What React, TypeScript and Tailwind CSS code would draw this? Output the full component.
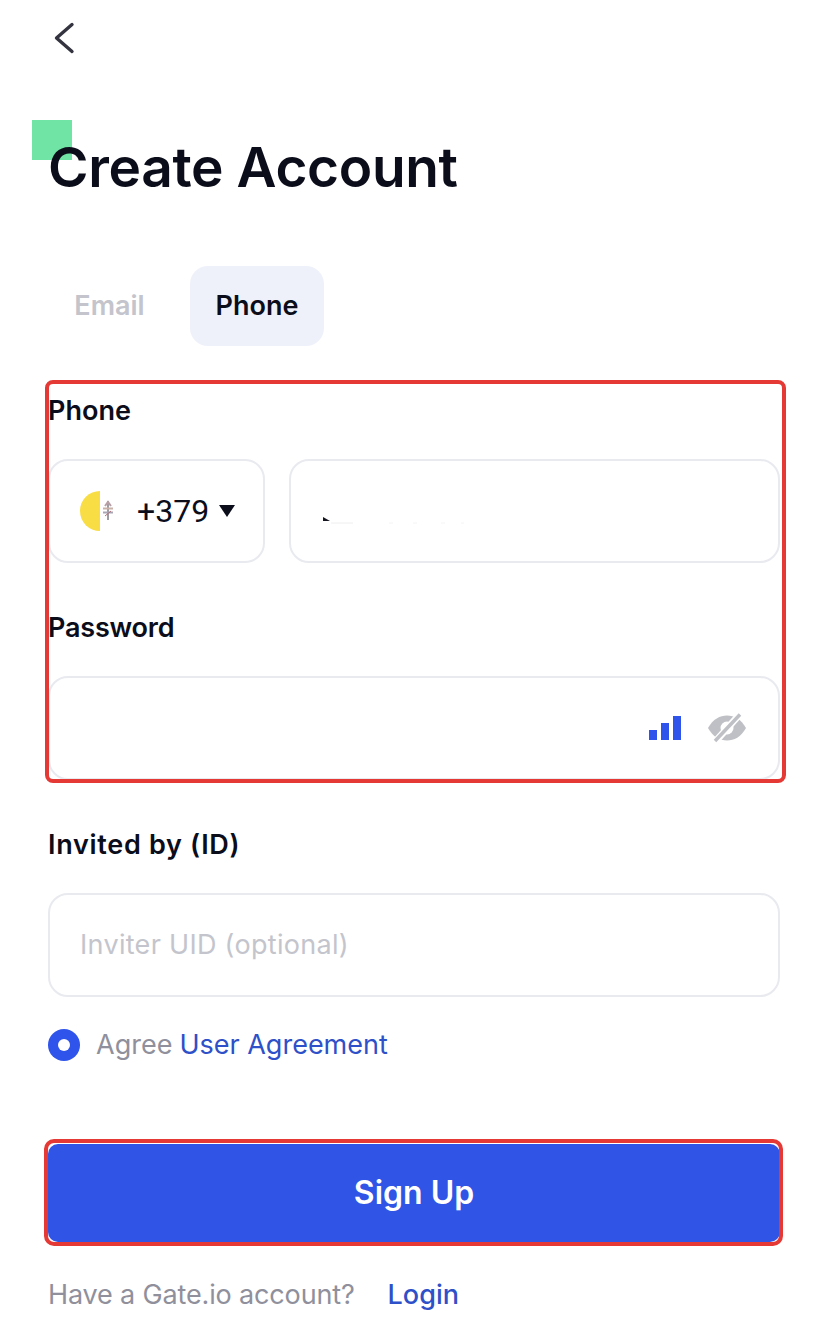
// Create Account screen: phone sign-up form

const FONT = "font-['Inter','Noto_Sans',sans-serif]";

// ─── Icons ────────────────────────────────────────────────────────────────────

function BackArrow() {
  return (
    <svg width="24" height="36" viewBox="0 0 24 36" fill="none" className="ml-[4px]" aria-hidden>
      <path d="M20 4.5 L4.5 18 L20 31.5" stroke="#33343F" strokeWidth="3.4" strokeLinecap="round" strokeLinejoin="round" />
    </svg>
  );
}

function VaticanFlag() {
  return (
    <svg width="44" height="44" viewBox="0 0 44 44" aria-hidden>
      <path d="M22 2 A20 20 0 0 0 22 42 Z" fill="#F8DD45" />
      <g fill="none">
        <path d="M30 12 V31" stroke="#3a3a44" strokeWidth="1" />
        <path d="M27 17 L30 13 L33 17" stroke="#b9a0a6" strokeWidth="2" />
        <path d="M25 19.5 H35" stroke="#c9b1a8" strokeWidth="2" />
        <path d="M25 23.5 H35" stroke="#a9a6b4" strokeWidth="2" />
        <path d="M27 27 L33 22" stroke="#b0727a" strokeWidth="1" />
      </g>
    </svg>
  );
}

function StrengthBars() {
  return (
    <svg width="32" height="24" viewBox="0 0 32 24" aria-hidden>
      <rect x="0" y="14" width="8" height="10" fill="#2F54EB" />
      <rect x="12" y="7" width="8" height="17" fill="#2F54EB" />
      <rect x="24" y="0" width="8" height="24" fill="#2F54EB" />
    </svg>
  );
}

function EyeOff() {
  return (
    <svg width="40" height="30" viewBox="0 0 40 30" aria-hidden>
      <path d="M1 15 C6 6 13 2.5 20 2.5 C27 2.5 34 6 39 15 C34 24 27 27.5 20 27.5 C13 27.5 6 24 1 15 Z" fill="#BFC0C6" />
      <circle cx="20" cy="15" r="6.5" fill="#fff" />
      <path d="M7 30 L34 0" stroke="#fff" strokeWidth="7" />
      <path d="M8 28 L33 1.5" stroke="#BFC0C6" strokeWidth="3.5" />
    </svg>
  );
}

// Leftover of the masked phone number in the reference
function MaskedNumber() {
  return (
    <svg width="150" height="8" viewBox="0 0 150 8" aria-hidden>
      <path d="M0 0 L7 4 L0 4 Z" fill="#14151f" />
      <path d="M8 6 H30" stroke="#eeeef0" strokeWidth="1" />
      <path d="M66 6 H70 M90 6 H94 M118 6 H122 M138 6 H141" stroke="#f4f4f6" strokeWidth="1" />
    </svg>
  );
}

// ─── Component ────────────────────────────────────────────────────────────────

export default function App() {
  return (
    <div className={`${FONT} relative h-[1334px] w-[828px] overflow-hidden bg-white px-[48px] text-[#0B0D1A]`}>
      {/* Green marker behind the title */}
      <div className="absolute left-[32px] top-[120px] h-[40px] w-[40px] bg-[#70E4A4]" aria-hidden />

      {/* Back */}
      <div className="pt-[20px]">
        <BackArrow />
      </div>

      {/* Title */}
      <h1 className="relative mt-[77px] text-[55px] font-semibold leading-[68px] tracking-[-0.35px] text-[#0B0D1A]">
        Create Account
      </h1>

      {/* Tabs */}
      <div className="mt-[65px] flex gap-[19px] text-[27px] font-semibold">
        <div className="flex h-[80px] w-[123px] items-center justify-center text-[#C3C4CC]">Email</div>
        <div className="flex h-[80px] w-[134px] items-center justify-center rounded-[18px] bg-[#EEF1FA]">Phone</div>
      </div>

      {/* Phone */}
      <div className="mt-[48px] text-[27px] font-semibold leading-[34px]">Phone</div>
      <div className="mt-[31px] flex gap-[24px]">
        <div className="flex h-[104px] w-[217px] items-center rounded-[20px] border-2 border-[#E9EAEF] pl-[28px]">
          <VaticanFlag />
          <span className="ml-[15px] font-['Roboto',sans-serif] text-[32px] font-normal leading-none">+379</span>
          <span className="ml-[10px] h-0 w-0 border-x-[8px] border-t-[12px] border-x-transparent border-t-[#0B0D1A]" />
        </div>
        <div className="flex h-[104px] flex-1 items-start rounded-[20px] border-2 border-[#E9EAEF] pl-[32px] pt-[56px]">
          <MaskedNumber />
        </div>
      </div>

      {/* Password */}
      <div className="mt-[48px] text-[27px] font-semibold leading-[34px] tracking-[-0.2px]">Password</div>
      <div className="mt-[31px] flex h-[104px] items-center justify-end gap-[26px] rounded-[20px] border-2 border-[#E9EAEF] pr-[31px]">
        <StrengthBars />
        <EyeOff />
      </div>

      {/* Invited by */}
      <div className="mt-[48px] text-[27px] font-semibold leading-[34px] tracking-[0.7px]">Invited by (ID)</div>
      <div className="mt-[31px] flex h-[104px] items-center rounded-[20px] border-2 border-[#E9EAEF] pl-[30px] text-[27px] tracking-[0.3px] text-[#C4C5CC]">
        Inviter UID (optional)
      </div>

      {/* Agreement */}
      <div className="mt-[32px] flex h-[32px] items-center text-[27px]">
        <span className="flex h-[32px] w-[32px] items-center justify-center rounded-full bg-[#2F54EB]">
          <span className="h-[12px] w-[12px] rounded-full bg-white" />
        </span>
        <span className="ml-[16px] text-[#8F909C]">Agree</span>
        <span className="ml-[7px] text-[#2E50C8]">User Agreement</span>
      </div>

      {/* Submit */}
      <div className="mt-[83px] flex h-[98px] items-center justify-center rounded-[10px] bg-[#2F54E6] text-[32px] font-semibold text-white">
        Sign Up
      </div>

      {/* Footer */}
      <div className="mt-[36px] flex items-center text-[27px] leading-[34px]">
        <span className="tracking-[-0.15px] text-[#8F909C]">Have a Gate.io account?</span>
        <span className="ml-[33px] font-medium text-[#2E50C8]">Login</span>
      </div>

      {/* Red annotation frames */}
      <div className="absolute left-[45px] top-[380px] h-[403px] w-[741px] rounded-[8px] border-[4px] border-[#E53935]" aria-hidden />
      <div className="absolute left-[44px] top-[1139px] h-[107px] w-[739px] rounded-[10px] border-[4px] border-[#E53935]" aria-hidden />
    </div>
  );
}
